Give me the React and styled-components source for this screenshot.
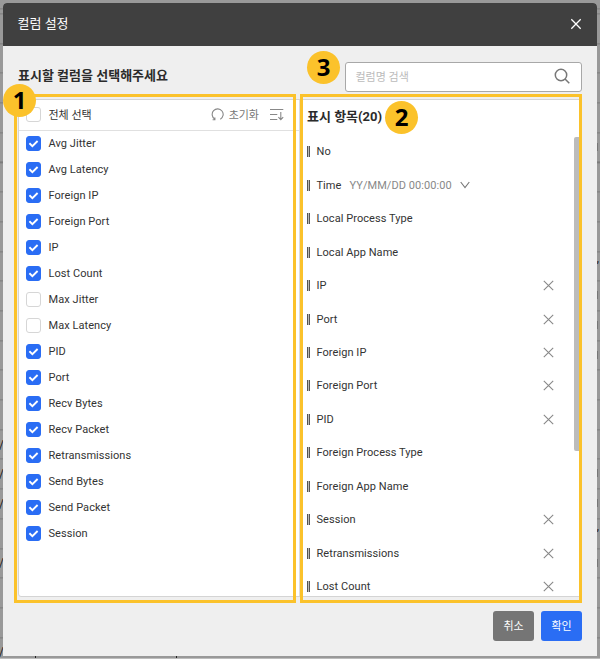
import React from 'react';
import styled, { createGlobalStyle } from 'styled-components';

const Global = createGlobalStyle`
  * { box-sizing: border-box; }
  body { margin: 0; overflow: hidden; font-family: Roboto, "Noto Sans CJK KR", sans-serif; color: #333; }
  button { font: inherit; }
`;

const Backdrop = styled.div`
  position: relative;
  width: 600px;
  height: 659px;
  padding: 2.5px 3px 3px;
  border-bottom: 1px solid #bdbdbd;
  background: repeating-linear-gradient(#7c7c7c 0 1px, #999 1px 29.7px) 0 13.4px;
`;

const Fragment = styled.span`
  position: absolute;
  left: ${(p) => p.$x}px;
  top: ${(p) => p.$y}px;
  font-size: 12px;
  line-height: 14px;
  color: #222;
`;

const Tick = styled.span`
  position: absolute;
  left: ${(p) => p.$x}px;
  top: ${(p) => p.$y}px;
  width: 1px;
  height: ${(p) => p.$h}px;
  background: ${(p) => p.$color};
`;

const Dialog = styled.section`
  position: relative;
  height: 653.5px;
  border-radius: 4px 4px 0 0;
  background: #efefef;
  overflow: hidden;
`;

const Header = styled.header`
  display: flex;
  align-items: center;
  justify-content: space-between;
  height: 43.5px;
  padding: 0 15.5px 0 14.5px;
  background: #404040;
  color: #fff;
`;

const Title = styled.h1`
  margin: 0;
  font-size: 13px;
  font-weight: 400;
  line-height: 20px;
`;

const Toolbar = styled.div`
  display: flex;
  justify-content: space-between;
  height: 53px;
  padding: 16px 15px 0;
`;

const Prompt = styled.h2`
  margin: 0;
  padding-top: 4px;
  font-size: 13px;
  font-weight: 700;
  line-height: 20px;
  color: #2b2b2b;
`;

const Search = styled.label`
  display: flex;
  align-items: center;
  justify-content: space-between;
  width: 237px;
  height: 30px;
  padding: 0 11.5px 2px 9.5px;
  border: 1px solid #a8a8a8;
  border-radius: 3px;
  background: #fff;
  font-size: 11px;
  color: #bbb;
`;

const Panels = styled.div`
  display: grid;
  grid-template-columns: 281px 282px;
  height: 498px;
  margin: 0 15px;
  border: 1px solid #d4d4d4;
  border-radius: 3px;
  background: #fff;
`;

const Choices = styled.div`
  border-right: 1px solid #ddd;
`;

const ChoicesHead = styled.div`
  display: flex;
  align-items: center;
  height: 30.5px;
  padding: 0 15px 1px 7px;
  border-bottom: 1px solid #e0e0e0;
  font-size: 11px;
`;

const Reset = styled.div`
  display: flex;
  align-items: center;
  gap: 5px;
  margin-left: auto;
  color: #777;
`;

const SortIcon = styled.svg`
  margin-left: 11px;
`;

const ChoiceRow = styled.div`
  display: flex;
  align-items: center;
  height: 26px;
  padding: 0 0 0.5px 7px;
  font-size: 11px;
  letter-spacing: 0.06px;
`;

const Check = styled.span`
  display: flex;
  align-items: center;
  justify-content: center;
  width: 15px;
  height: 15px;
  margin-right: 7.5px;
  border: 1px solid ${(p) => (p.$on ? '#2a6df4' : '#d6d6d6')};
  border-radius: 3px;
  background: ${(p) => (p.$on ? '#2a6df4' : '#fff')};
`;

const Shown = styled.div`
  position: relative;
  padding-left: 7px;
  overflow: hidden;
`;

const ShownTitle = styled.h3`
  margin: 0;
  height: 35.1px;
  font-size: 13px;
  font-weight: 700;
  line-height: 34px;
  color: #2b2b2b;
`;

const ShownRow = styled.div`
  display: flex;
  align-items: center;
  height: 33.45px;
  padding-right: 28px;
  font-size: 11px;
  letter-spacing: 0.06px;
`;

const Grip = styled.span`
  width: 3px;
  height: 11px;
  margin-right: 6.5px;
  border: solid #555;
  border-width: 0 1px;
  background: #b8b8b8;
`;

const Format = styled.span`
  display: flex;
  align-items: center;
  gap: 8px;
  margin-left: 8px;
  color: #888;
`;

const RemoveIcon = styled.svg`
  margin-left: auto;
`;

const Scrollbar = styled.div`
  position: absolute;
  top: 37px;
  right: 2px;
  width: 6px;
  height: 314px;
  border-radius: 2px 0 0 2px;
  background: #bcbcbc;
`;

const Footer = styled.footer`
  display: flex;
  justify-content: flex-end;
  gap: 7px;
  padding: 14px 15px 0;
`;

const Button = styled.button`
  width: 41px;
  height: 30px;
  padding: 0 0 2px;
  border: 0;
  border-radius: 3px;
  background: ${(p) => (p.$primary ? '#2a6df4' : '#757575')};
  color: #fff;
  font-size: 11px;
`;

const Outline = styled.div`
  position: absolute;
  left: ${(p) => p.$x}px;
  top: 94px;
  width: 282px;
  height: 509px;
  border: 3px solid #fbc22b;
`;

const Badge = styled.div`
  position: absolute;
  left: ${(p) => p.$x}px;
  top: ${(p) => p.$y}px;
  width: 33px;
  height: 33px;
  border-radius: 50%;
  background: #fbc22b;
  color: #000;
  font: 700 24px/32px "Noto Sans", sans-serif;
  text-align: center;
`;

const choices = [
  'Avg Jitter', 'Avg Latency', 'Foreign IP', 'Foreign Port', 'IP', 'Lost Count', 'Max Jitter', 'Max Latency',
  'PID', 'Port', 'Recv Bytes', 'Recv Packet', 'Retransmissions', 'Send Bytes', 'Send Packet', 'Session',
];
const unchecked = ['Max Jitter', 'Max Latency'];

const shown = [
  ['No'], ['Time'], ['Local Process Type'], ['Local App Name'], ['IP', true], ['Port', true], ['Foreign IP', true],
  ['Foreign Port', true], ['PID', true], ['Foreign Process Type'], ['Foreign App Name'], ['Session', true],
  ['Retransmissions', true], ['Lost Count', true],
];

function Checkbox({ on }) {
  return (
    <Check $on={on}>
      {on && (
        <svg width="11" height="11" viewBox="0 0 11 11" fill="none" stroke="#fff" strokeWidth="1.9">
          <path d="M1.4 5.3 4.4 8.1 9.6 3" />
        </svg>
      )}
    </Check>
  );
}

export default function App() {
  return (
    <Backdrop>
      <Global />
      {[438, 467, 497, 556, 645].map((y) => <Fragment key={y} $x={-1} $y={y}>/</Fragment>)}
      {[260, 528].map((y) => <Fragment key={y} $x={596.5} $y={y}>’</Fragment>)}
      {[143, 291, 321, 351, 469, 499, 559].map((y) => <Tick key={y} $x={597} $y={y} $h={8} $color="#777" />)}
      {[35, 176].map((x) => <Tick key={x} $x={x} $y={656} $h={2} $color="#222" />)}
      <Dialog>
        <Header>
          <Title>컬럼 설정</Title>
          <svg width="12" height="12" viewBox="0 0 12 12" stroke="#fff" strokeWidth="1.3">
            <path d="m1.3 1.3 9.4 9.4m0-9.4-9.4 9.4" />
          </svg>
        </Header>
        <Toolbar>
          <Prompt>표시할 컬럼을 선택해주세요</Prompt>
          <Search>
            <span>컬럼명 검색</span>
            <svg width="16" height="16" viewBox="0 0 16 16" fill="none" stroke="#777" strokeWidth="1.5">
              <circle cx="7" cy="7" r="5.7" />
              <path d="m11 11 4.3 4.3" />
            </svg>
          </Search>
        </Toolbar>
        <Panels>
          <Choices>
            <ChoicesHead>
              <Checkbox />
              <span>전체 선택</span>
              <Reset>
                <svg width="13" height="13" viewBox="0 0 13 13" fill="none" stroke="#888" strokeWidth="1.1">
                  <path d="M3.7 11A5.5 5.5 0 1 1 9.3 11.2M1.6 11.8h2.3V9.6" />
                </svg>
                <span>초기화</span>
              </Reset>
              <SortIcon width="14" height="13" viewBox="0 0 14 13" fill="none" stroke="#888" strokeWidth="1.1">
                <path d="M0 1.5h13.3M0 6.5h7.3M0 11.5h7.3M10.8 4v7.6M8.4 9.2l2.4 2.5 2.4-2.5" />
              </SortIcon>
            </ChoicesHead>
            {choices.map((name) => (
              <ChoiceRow key={name}>
                <Checkbox on={!unchecked.includes(name)} />
                {name}
              </ChoiceRow>
            ))}
          </Choices>
          <Shown>
            <ShownTitle>표시 항목(20)</ShownTitle>
            {shown.map(([name, removable]) => (
              <ShownRow key={name}>
                <Grip />
                {name}
                {name === 'Time' && (
                  <Format>
                    YY/MM/DD 00:00:00
                    <svg width="10" height="8" viewBox="0 0 10 8" fill="none" stroke="#777" strokeWidth="1.1">
                      <path d="m.7 1 4.3 5.6L9.3 1" />
                    </svg>
                  </Format>
                )}
                {removable && (
                  <RemoveIcon width="11" height="11" viewBox="0 0 11 11" stroke="#888" strokeWidth="1.1">
                    <path d="m.8.8 9.4 9.4m0-9.4L.8 10.2" />
                  </RemoveIcon>
                )}
              </ShownRow>
            ))}
            <Scrollbar />
          </Shown>
        </Panels>
        <Footer>
          <Button>취소</Button>
          <Button $primary>확인</Button>
        </Footer>
      </Dialog>
      <Outline $x={14} />
      <Outline $x={300} />
      <Badge $x={3} $y={84}>1</Badge>
      <Badge $x={385} $y={101}>2</Badge>
      <Badge $x={307} $y={51}>3</Badge>
    </Backdrop>
  );
}
